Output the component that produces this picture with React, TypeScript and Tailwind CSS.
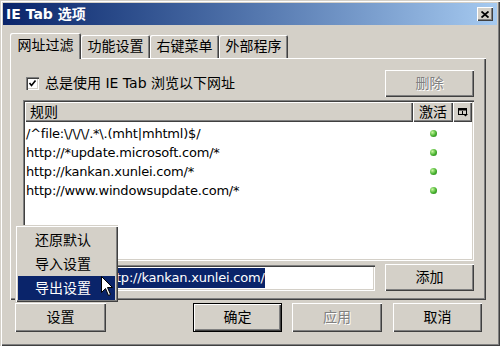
import React from "react";

const raised = "shadow-[inset_1px_1px_#ffffff,inset_-1px_-1px_#404040,inset_-2px_-2px_#808080]";
const sunken = "shadow-[inset_1px_1px_#808080,inset_2px_2px_#404040,inset_-1px_-1px_#ffffff,inset_-2px_-2px_#d4d0c8]";
const disabled = "text-[#808080] [text-shadow:1px_1px_#ffffff]";

function Dot() {
  return (
    <div className="w-[7px] h-[7px] rounded-full bg-[radial-gradient(circle_at_35%_35%,#c8f7a0,#46b22e_55%,#1c6a12)]" />
  );
}

const rules = [
  "/^file:\\/\\/\\/.*\\.(mht|mhtml)$/",
  "http://*update.microsoft.com/*",
  "http://kankan.xunlei.com/*",
  "http://www.windowsupdate.com/*",
];

export default function App() {
  return (
    <div className="relative w-[500px] h-[346px] bg-[#d4d0c8] overflow-hidden font-['DejaVu_Sans','Noto_Sans_CJK_SC',sans-serif] text-black shadow-[inset_1px_1px_#d4d0c8,inset_2px_2px_#ffffff,inset_-1px_-1px_#404040,inset_-2px_-2px_#808080]">
      {/* title bar */}
      <div className="mx-[3px] mt-[3px] h-[22px] bg-linear-to-r from-[#0a246a] to-[#a6caf0] flex items-center">
        <span className="ml-[3px] text-white font-bold text-[14px] leading-none">IE Tab 选项</span>
        <div className={`ml-auto mr-[4px] w-[16px] h-[14px] bg-[#d4d0c8] flex items-center justify-center ${raised}`}>
          <svg width="8" height="7" viewBox="0 0 8 7">
            <path d="M0.5 0.5 L7.5 6.5 M7.5 0.5 L0.5 6.5" stroke="#000" strokeWidth="1.8" />
          </svg>
        </div>
      </div>

      {/* tabs */}
      <div className="flex items-end h-[25px] mt-[8px] ml-[10px]">
        <div className="relative z-10 w-[71px] h-[26px] -mb-[1px] bg-[#d4d0c8] rounded-t-[2px] flex items-center justify-center text-[14px] shadow-[inset_1px_1px_#ffffff,inset_-1px_0_#404040,inset_-2px_0_#808080]">
          <span className="-mt-[2px]">网址过滤</span>
        </div>
        {["功能设置", "右键菜单", "外部程序"].map((t) => (
          <div key={t} className="w-[69px] h-[23px] bg-[#d4d0c8] rounded-t-[2px] flex items-center justify-center text-[14px] shadow-[inset_1px_1px_#ffffff,inset_-1px_0_#404040,inset_-2px_0_#808080]">
            {t}
          </div>
        ))}
      </div>

      {/* panel */}
      <div className={`ml-[10px] w-[476px] h-[242px] pl-[13px] pr-[12px] pt-[12px] flex flex-col ${raised}`}>
        <div className="flex items-center h-[27px]">
          <div className={`ml-[3px] w-[13px] h-[13px] bg-white flex items-center justify-center ${sunken}`}>
            <svg width="9" height="9" viewBox="0 0 9 9">
              <path d="M1.5 4 L3.5 6.5 L7.5 1.5" stroke="#000" strokeWidth="1.6" fill="none" />
            </svg>
          </div>
          <span className="ml-[6px] text-[14px]">总是使用 IE Tab 浏览以下网址</span>
          <div className={`ml-auto w-[89px] h-[27px] flex items-center justify-center text-[14px] ${raised} ${disabled}`}>
            删除
          </div>
        </div>

        <div className={`mt-[3px] h-[161px] bg-white p-[2px] flex flex-col ${sunken}`}>
          <div className="flex h-[20px] text-[14px]">
            <div className={`flex-1 bg-[#d4d0c8] flex items-center pl-[5px] ${raised}`}>规则</div>
            <div className={`w-[40px] bg-[#d4d0c8] flex items-center justify-center ${raised}`}>激活</div>
            <div className={`w-[19px] bg-[#d4d0c8] flex items-center justify-center ${raised}`}>
              <svg width="10" height="9" viewBox="0 0 10 9">
                <rect x="0.5" y="0.5" width="8" height="6" fill="none" stroke="#000" />
                <rect x="0.5" y="0.5" width="8" height="2" fill="#000" />
                <path d="M4.5 3 V7" stroke="#000" />
                <path d="M5 6 H10 L7.5 8.5 Z" fill="#000" />
              </svg>
            </div>
          </div>
          <div className="pt-[2px]">
            {rules.map((r) => (
              <div key={r} className="flex items-center h-[19px] text-[13px]">
                <span className="flex-1 pl-[1px] whitespace-nowrap tracking-[-0.2px]">{r}</span>
                <div className="w-[40px] flex justify-center">
                  <Dot />
                </div>
                <div className="w-[19px]" />
              </div>
            ))}
          </div>
        </div>

        <div className="mt-[3px] flex h-[27px]">
          <div className={`w-[352px] h-[26px] mt-[1px] bg-white flex items-center pl-[80px] ${sunken}`}>
            <span className="inline-block h-[20px] leading-[20px] bg-[#0a246a] text-white text-[13px] whitespace-nowrap tracking-[-0.2px]">
              http://kankan.xunlei.com/
            </span>
          </div>
          <div className={`ml-auto w-[89px] h-[27px] flex items-center justify-center text-[14px] ${raised}`}>
            添加
          </div>
        </div>
      </div>

      {/* bottom buttons */}
      <div className="flex mt-[3px] ml-[15px] h-[29px] text-[14px]">
        <div className={`w-[91px] h-[29px] flex items-center justify-center ${raised}`}>设置</div>
        <div className="ml-[87px] w-[89px] h-[29px] flex items-center justify-center border border-black shadow-[inset_1px_1px_#ffffff,inset_-1px_-1px_#404040,inset_-2px_-2px_#808080]">
          确定
        </div>
        <div className={`ml-[10px] w-[90px] h-[29px] flex items-center justify-center ${raised} ${disabled}`}>应用</div>
        <div className={`ml-[11px] w-[89px] h-[29px] flex items-center justify-center ${raised}`}>取消</div>
      </div>

      {/* popup menu */}
      <div className="absolute left-[15px] top-[225px] w-[103px] h-[77px] bg-[#d4d0c8] pt-[3px] px-[3px] text-[14px] shadow-[inset_1px_1px_#d4d0c8,inset_2px_2px_#ffffff,inset_-1px_-1px_#404040,inset_-2px_-2px_#808080]">
        <div className="h-[24px] flex items-center pl-[17px]">还原默认</div>
        <div className="h-[24px] flex items-center pl-[17px]">导入设置</div>
        <div className="h-[24px] flex items-center pl-[17px] bg-[#0a246a] text-white">导出设置</div>
      </div>

      {/* cursor */}
      <svg className="absolute left-[101px] top-[276px]" width="13" height="21" viewBox="0 0 13 21">
        <path d="M0.5 0.5 L0.5 16.5 L4.5 12.5 L7.5 19.5 L9.5 18.5 L6.5 11.5 L11.5 11.5 Z" fill="#fff" stroke="#000" strokeWidth="1" />
      </svg>
    </div>
  );
}
